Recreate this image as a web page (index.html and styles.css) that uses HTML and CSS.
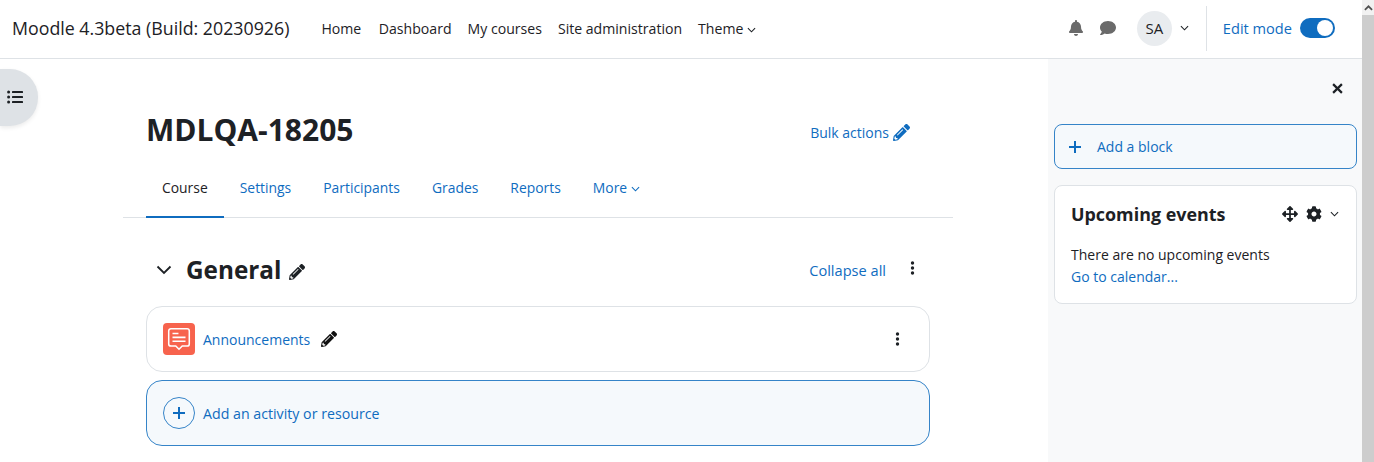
FILE: index.html
```html
<!DOCTYPE html>
<html lang="en">
<head>
  <meta charset="UTF-8" />
  <title>MDLQA-18205</title>
  <link rel="stylesheet" href="styles.css">
</head>
<body>
  <div class="window">
    <div class="page">
      <nav class="navbar">
        <span class="brand">Moodle 4.3beta (Build: 20230926)</span>
        <div class="nav-links">
          <a class="nav-home">Home</a>
          <a>Dashboard</a>
          <a>My courses</a>
          <a>Site administration</a>
          <a>Theme
            <svg class="chev-sm" viewBox="0 0 10 6"><path d="M1 1l4 4 4-4"/></svg>
          </a>
        </div>
        <div class="nav-right">
          <svg class="nav-icon bell" viewBox="0 0 448 512"><path d="M224 512c35.32 0 63.97-28.65 63.97-64H160.03c0 35.35 28.65 64 63.97 64zm215.39-149.71c-19.32-20.76-55.47-51.99-55.47-154.29 0-77.7-54.48-139.9-127.94-155.16V32c0-17.67-14.32-32-31.98-32s-31.98 14.33-31.98 32v20.84C118.56 68.1 64.08 130.3 64.08 208c0 102.3-36.15 133.53-55.47 154.29-6 6.45-8.66 14.16-8.61 21.71.11 16.4 12.98 32 32.1 32h383.8c19.12 0 32-15.6 32.1-32 .05-7.55-2.61-15.27-8.61-21.71z"/></svg>
          <svg class="nav-icon comment" viewBox="0 0 512 512"><path d="M256 32C114.6 32 0 125.1 0 240c0 49.6 21.4 95 57 130.7C44.5 421.1 2.7 466 2.2 466.5c-2.2 2.3-2.8 5.7-1.5 8.7S4.8 480 8 480c66.3 0 116-31.8 140.6-51.4 32.7 12.3 69 19.4 107.4 19.4 141.4 0 256-93.1 256-208S397.4 32 256 32z"/></svg>
          <div class="avatar">SA</div>
          <svg class="chev-sm user-chev" viewBox="0 0 10 6"><path d="M1 1l4 4 4-4"/></svg>
          <div class="edit-mode">
            <span>Edit mode</span>
            <span class="switch"><span class="knob"></span></span>
          </div>
        </div>
      </nav>

      <div class="drawer-toggle">
        <svg viewBox="0 0 16 14"><circle cx="1.6" cy="2" r="1.5"/><circle cx="1.6" cy="7" r="1.5"/><circle cx="1.6" cy="12" r="1.5"/><rect x="5" y="1" width="11" height="2" rx=".6"/><rect x="5" y="6" width="11" height="2" rx=".6"/><rect x="5" y="11" width="11" height="2" rx=".6"/></svg>
      </div>

      <div class="columns">
        <main class="main">
          <header class="course-head">
            <h1>MDLQA-18205</h1>
            <a class="bulk">Bulk actions
              <svg class="pencil pencil-bulk" viewBox="0 0 512 512"><path d="M497.9 142.1l-46.1 46.1c-4.7 4.7-12.3 4.7-17 0l-111-111c-4.7-4.7-4.7-12.3 0-17l46.1-46.1c18.7-18.7 49.1-18.7 67.9 0l60.1 60.1c18.8 18.7 18.8 49.1 0 67.9zM284.2 99.8L21.6 362.4.4 483.9c-2.9 16.4 11.4 30.6 27.8 27.8l121.5-21.3 262.6-262.6c4.7-4.7 4.7-12.3 0-17l-111-111c-4.8-4.7-12.4-4.7-17.1 0zM124.1 339.9c-5.5-5.5-5.5-14.3 0-19.8l154-154c5.5-5.5 14.3-5.5 19.8 0s5.5 14.3 0 19.8l-154 154c-5.5 5.5-14.3 5.5-19.8 0zM88 424h48v36.3l-64.5 11.3-31.1-31.1L51.7 376H88v48z"/></svg>
            </a>
          </header>

          <div class="tabs">
            <a class="tab active">Course</a>
            <a class="tab">Settings</a>
            <a class="tab">Participants</a>
            <a class="tab">Grades</a>
            <a class="tab">Reports</a>
            <a class="tab">More
              <svg class="chev-sm" viewBox="0 0 10 6"><path d="M1 1l4 4 4-4"/></svg>
            </a>
          </div>

          <section class="section">
            <div class="section-head">
              <svg class="section-chev" viewBox="0 0 16 10"><path d="M1.5 1.5L8 8l6.5-6.5"/></svg>
              <h2>General</h2>
              <svg class="pencil pencil-dark" viewBox="0 0 512 512"><path d="M497.9 142.1l-46.1 46.1c-4.7 4.7-12.3 4.7-17 0l-111-111c-4.7-4.7-4.7-12.3 0-17l46.1-46.1c18.7-18.7 49.1-18.7 67.9 0l60.1 60.1c18.8 18.7 18.8 49.1 0 67.9zM284.2 99.8L21.6 362.4.4 483.9c-2.9 16.4 11.4 30.6 27.8 27.8l121.5-21.3 262.6-262.6c4.7-4.7 4.7-12.3 0-17l-111-111c-4.8-4.7-12.4-4.7-17.1 0zM124.1 339.9c-5.5-5.5-5.5-14.3 0-19.8l154-154c5.5-5.5 14.3-5.5 19.8 0s5.5 14.3 0 19.8l-154 154c-5.5 5.5-14.3 5.5-19.8 0zM88 424h48v36.3l-64.5 11.3-31.1-31.1L51.7 376H88v48z"/></svg>
              <a class="collapse-all">Collapse all</a>
              <svg class="dots" viewBox="0 0 4 14"><circle cx="2" cy="2" r="1.7"/><circle cx="2" cy="7" r="1.7"/><circle cx="2" cy="12" r="1.7"/></svg>
            </div>

            <div class="activity">
              <div class="forum-icon">
                <svg viewBox="0 0 24 24"><path d="M4.500 2.500h15a2 2 0 0 1 2 2v12a2 2 0 0 1-2 2h-4.500L12 21.500 9 18.500H4.500a2 2 0 0 1-2-2v-12a2 2 0 0 1 2-2z"/><path d="M6 7h5.500M6 10.500h12M6 14h12"/></svg>
              </div>
              <a class="activity-name">Announcements</a>
              <svg class="pencil pencil-black" viewBox="0 0 512 512"><path d="M497.9 142.1l-46.1 46.1c-4.7 4.7-12.3 4.7-17 0l-111-111c-4.7-4.7-4.7-12.3 0-17l46.1-46.1c18.7-18.7 49.1-18.7 67.9 0l60.1 60.1c18.8 18.7 18.8 49.1 0 67.9zM284.2 99.8L21.6 362.4.4 483.9c-2.9 16.4 11.4 30.6 27.8 27.8l121.5-21.3 262.6-262.6c4.7-4.7 4.7-12.3 0-17l-111-111c-4.8-4.7-12.4-4.7-17.1 0zM124.1 339.9c-5.5-5.5-5.5-14.3 0-19.8l154-154c5.5-5.5 14.3-5.5 19.8 0s5.5 14.3 0 19.8l-154 154c-5.5 5.5-14.3 5.5-19.8 0zM88 424h48v36.3l-64.5 11.3-31.1-31.1L51.7 376H88v48z"/></svg>
              <svg class="dots activity-dots" viewBox="0 0 4 14"><circle cx="2" cy="2" r="1.7"/><circle cx="2" cy="7" r="1.7"/><circle cx="2" cy="12" r="1.7"/></svg>
            </div>

            <a class="add-activity">
              <span class="plus-circle">
                <svg viewBox="0 0 14 14"><path d="M7 1v12M1 7h12"/></svg>
              </span>
              Add an activity or resource
            </a>
          </section>
        </main>

        <aside class="blocks">
          <div class="blocks-close">
            <svg viewBox="0 0 10 10"><path d="M1 1l8 8M9 1l-8 8"/></svg>
          </div>
          <a class="add-block">
            <svg viewBox="0 0 12 12"><path d="M6 0v12M0 6h12"/></svg>
            Add a block
          </a>
          <div class="block">
            <div class="block-head">
              <h3>Upcoming events</h3>
              <svg class="block-move" viewBox="0 0 512 512"><path d="M352.201 425.775l-79.196 79.196c-9.373 9.373-24.568 9.373-33.941 0l-79.196-79.196c-15.119-15.119-4.411-40.971 16.971-40.97h51.162L228 284H127.196v51.162c0 21.382-25.851 32.09-40.971 16.971L7.029 272.937c-9.373-9.373-9.373-24.569 0-33.941L86.225 159.8c15.119-15.119 40.971-4.411 40.971 16.971V228H228V127.196h-51.23c-21.382 0-32.09-25.851-16.971-40.971l79.196-79.196c9.373-9.373 24.568-9.373 33.941 0l79.196 79.196c15.119 15.119 4.411 40.971-16.971 40.971h-51.162V228h100.804v-51.162c0-21.382 25.851-32.09 40.97-16.971l79.196 79.196c9.373 9.373 9.373 24.569 0 33.941L425.773 352.2c-15.119 15.119-40.971 4.411-40.97-16.971V284H284v100.804h51.23c21.382 0 32.09 25.851 16.971 40.971z"/></svg>
              <svg class="block-cog" viewBox="0 0 512 512"><path d="M487.4 315.7l-42.6-24.6c4.3-23.2 4.3-47 0-70.2l42.6-24.6c4.9-2.8 7.1-8.6 5.5-14-11.1-35.6-30-67.8-54.7-94.6-3.8-4.1-10-5.1-14.8-2.3L380.8 110c-17.9-15.4-38.5-27.3-60.8-35.1V25.8c0-5.6-3.9-10.5-9.4-11.7-36.7-8.2-74.3-7.8-109.2 0-5.5 1.2-9.4 6.1-9.4 11.7V75c-22.2 7.9-42.8 19.8-60.8 35.1L88.7 85.5c-4.9-2.8-11-1.9-14.8 2.3-24.7 26.7-43.6 58.9-54.7 94.6-1.7 5.4.6 11.2 5.5 14L67.3 221c-4.3 23.2-4.3 47 0 70.2l-42.6 24.6c-4.9 2.8-7.1 8.6-5.5 14 11.1 35.6 30 67.8 54.7 94.6 3.8 4.1 10 5.1 14.8 2.3l42.6-24.6c17.9 15.4 38.5 27.3 60.8 35.1v49.2c0 5.6 3.9 10.5 9.4 11.7 36.7 8.2 74.3 7.8 109.2 0 5.5-1.2 9.4-6.1 9.4-11.7v-49.2c22.2-7.9 42.8-19.8 60.8-35.1l42.6 24.6c4.9 2.8 11 1.9 14.8-2.3 24.7-26.7 43.6-58.9 54.7-94.6 1.5-5.500-.7-11.3-5.6-14.1zM256 336c-44.1 0-80-35.9-80-80s35.9-80 80-80 80 35.9 80 80-35.9 80-80 80z"/></svg>
              <svg class="chev-sm" viewBox="0 0 10 6"><path d="M1 1l4 4 4-4"/></svg>
            </div>
            <p>There are no upcoming events</p>
            <a class="cal-link">Go to calendar...</a>
          </div>
        </aside>
      </div>
    </div>

    <div class="scrollbar">
      <div class="scroll-up">
        <svg viewBox="0 0 8 5"><path d="M.8 4.200L4 1l3.200 3.200"/></svg>
      </div>
    </div>
  </div>
</body>
</html>
```

FILE: styles.css
```css
* {
  box-sizing: border-box;
}

html, body {
  height: 100%;
  margin: 0;
  overflow: hidden;
}

body {
  font-family: "Open Sans", "Noto Sans", sans-serif;
  font-size: 14px;
  color: #1d2125;
  background: #fff;
}

a {
  color: #0f6cbf;
  text-decoration: none;
}

svg {
  flex: none;
  fill: currentColor;
}

.window {
  display: flex;
  height: 462px;
}

.page {
  position: relative;
  flex: 1;
  min-width: 0;
  display: flex;
  flex-direction: column;
}

.scrollbar {
  width: 12px;
  background: #cdcdcd;
}

.scroll-up {
  height: 15px;
  background: #f1f1f1;
  display: flex;
  align-items: center;
  justify-content: center;
}

.scroll-up svg {
  width: 9px;
  height: 6px;
  fill: none;
  stroke: #505050;
  stroke-width: 1.5;
}

/* top bar */
.navbar {
  display: flex;
  align-items: center;
  height: 59px;
  padding-left: 12px;
  padding-bottom: 2px;
  border-bottom: 1px solid #dee2e6;
  flex: none;
}

.brand {
  font-size: 17.8px;
  margin-right: 32px;
  white-space: nowrap;
}

.nav-links {
  display: flex;
  gap: 16px;
  font-size: 14.1px;
}

.nav-links a {
  color: #1d2125;
  white-space: nowrap;
}

.nav-home {
  margin-right: 1.5px;
}

.chev-sm {
  width: 9px;
  height: 6px;
  fill: none;
  stroke: currentColor;
  stroke-width: 1.2;
  vertical-align: 1px;
}

.nav-right {
  margin-left: auto;
  display: flex;
  align-items: center;
  padding-right: 27px;
  color: #1d2125;
}

.nav-icon {
  color: #6a6a6a;
}

.bell {
  width: 14px;
  height: 16px;
  margin-right: 17px;
}

.comment {
  width: 16px;
  height: 16px;
  margin-right: 21px;
}

.avatar {
  width: 35px;
  height: 35px;
  border-radius: 50%;
  background: #e9ecef;
  display: flex;
  align-items: center;
  justify-content: center;
  font-size: 15px;
  margin-right: 8px;
}

.user-chev {
  margin-right: 17px;
}

.edit-mode {
  display: flex;
  align-items: center;
  height: 45px;
  padding-left: 16px;
  border-left: 1px solid #dee2e6;
  color: #0f6cbf;
  gap: 8px;
  font-size: 14.6px;
}

.switch {
  width: 35px;
  height: 20px;
  border-radius: 10px;
  background: #0f6cbf;
  display: flex;
  align-items: center;
  justify-content: flex-end;
  padding-right: 2px;
}

.knob {
  width: 16px;
  height: 16px;
  border-radius: 50%;
  background: #fff;
}

/* left drawer button */
.drawer-toggle {
  position: absolute;
  left: 0;
  top: 69px;
  width: 38px;
  height: 57px;
  padding: 0 0 1px 7px;
  background: #dee2e6;
  border-radius: 0 28px 28px 0;
  box-shadow: 0 2px 4px rgba(0, 0, 0, 0.08);
  display: flex;
  align-items: center;
}

.drawer-toggle svg {
  width: 16px;
  height: 14px;
}

.columns {
  flex: 1;
  min-height: 0;
  display: flex;
}

/* course content */
.main {
  width: 1048px;
  flex: none;
  padding-left: 123px;
  padding-right: 95px;
}

.course-head {
  display: flex;
  align-items: center;
  justify-content: space-between;
  height: 58px;
  margin-top: 43px;
  padding: 0 43px 0 23px;
}

h1 {
  margin: 0 0 4px;
  font-size: 30px;
  font-weight: 700;
}

.bulk {
  display: flex;
  align-items: center;
  gap: 4px;
  margin-top: 2px;
}

.pencil {
  width: 16px;
  height: 16px;
}

.pencil-bulk {
  width: 17px;
  height: 17px;
}

.tabs {
  display: flex;
  height: 58px;
  padding-left: 23px;
  border-bottom: 1px solid #dee2e6;
  font-size: 13.9px;
}

.tab {
  padding: 18px 16px 0;
  white-space: nowrap;
}

.tab.active {
  color: #1d2125;
  border-bottom: 2px solid #0f6cbf;
  margin-bottom: -1px;
}

.section {
  padding: 0 23px;
}

.section-head {
  display: flex;
  align-items: center;
  height: 53px;
  margin-top: 25px;
}

.section-chev {
  width: 16px;
  height: 10px;
  margin-left: 10px;
  fill: none;
  stroke: #1d2125;
  stroke-width: 1.8;
}

h2 {
  margin: 0 0 0 14px;
  font-size: 24.3px;
  font-weight: 700;
}

.pencil-dark {
  margin-left: 8px;
  margin-top: 4px;
}

.collapse-all {
  margin-left: auto;
  margin-right: 24px;
  font-size: 14.6px;
}

.dots {
  width: 5px;
  height: 14px;
  margin-right: 15px;
  margin-top: -4px;
}

.activity {
  display: flex;
  align-items: center;
  height: 66px;
  margin-top: 10px;
  padding: 0 29px 0 16px;
  border: 1px solid #dee2e6;
  border-radius: 16px;
}

.forum-icon {
  width: 32px;
  height: 32px;
  border-radius: 4px;
  background: #f7634d;
  display: flex;
  align-items: center;
  justify-content: center;
  margin-right: 8px;
}

.forum-icon svg {
  width: 26px;
  height: 26px;
  fill: none;
  stroke: #fff;
  stroke-width: 1.4;
}

.pencil-black {
  margin-left: 11px;
  color: #111;
}

.activity-dots {
  margin: 0 0 0 auto;
}

.add-activity {
  display: flex;
  align-items: center;
  height: 66px;
  margin-top: 8px;
  padding-left: 16px;
  gap: 8px;
  background: #f5f9fc;
  border: 1px solid #3584c8;
  border-radius: 16px;
  font-size: 14.2px;
}

.plus-circle {
  width: 32px;
  height: 32px;
  border: 1px solid #3584c8;
  border-radius: 50%;
  display: flex;
  align-items: center;
  justify-content: center;
}

.plus-circle svg {
  width: 14px;
  height: 14px;
  fill: none;
  stroke: #0f6cbf;
  stroke-width: 2;
}

/* right block drawer */
.blocks {
  flex: 1;
  background: #f8f9fa;
  padding: 0 5px 0 6px;
}

.blocks-close {
  display: flex;
  justify-content: flex-end;
  align-items: center;
  height: 58px;
  padding-right: 14px;
}

.blocks-close svg {
  width: 11px;
  height: 11px;
  fill: none;
  stroke: #1d2125;
  stroke-width: 2;
}

.add-block {
  display: flex;
  align-items: center;
  height: 45px;
  margin-top: 7px;
  padding-left: 14px;
  gap: 16px;
  background: #f5f9fc;
  border: 1px solid #3584c8;
  border-radius: 8px;
}

.add-block svg {
  width: 12px;
  height: 12px;
  fill: none;
  stroke: #0f6cbf;
  stroke-width: 2;
}

.block {
  margin-top: 16px;
  height: 119px;
  padding: 15px 17px 16px 16px;
  background: #fff;
  border: 1px solid #dee2e6;
  border-radius: 8px;
}

.block-head {
  display: flex;
  align-items: center;
  height: 26px;
  margin-bottom: 17px;
}

h3 {
  margin: 0 auto 0 0;
  font-size: 17.9px;
  font-weight: 700;
}

.block-move {
  width: 16px;
  height: 16px;
  margin-right: 8px;
}

.block-cog {
  width: 16px;
  height: 16px;
  margin-right: 8px;
}

.block p {
  margin: 0;
  line-height: 22px;
}

.cal-link {
  line-height: 22px;
}
```
